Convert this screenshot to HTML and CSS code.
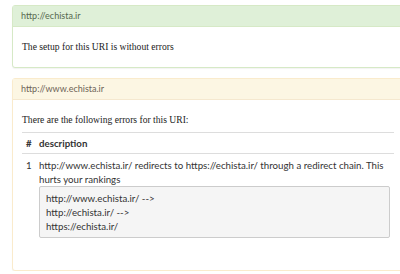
FILE: index.html
```html
<!DOCTYPE html>
<html>
<head>
<meta charset="utf-8">
<link rel="stylesheet" href="styles.css">
</head>
<body>
<div class="page">
  <div class="panel panel-ok">
    <div class="panel-heading">http://echista.ir</div>
    <div class="panel-body">
      <p class="msg">The setup for this URI is without errors</p>
    </div>
  </div>
  <div class="panel panel-warn">
    <div class="panel-heading">http://www.echista.ir</div>
    <div class="panel-body">
      <p class="msg msg-tight">There are the following errors for this URI:</p>
      <table class="errors">
        <thead>
          <tr><th class="num">#</th><th>description</th></tr>
        </thead>
        <tbody>
          <tr>
            <td class="num">1</td>
            <td>http://www.echista.ir/ redirects to https://echista.ir/ through a redirect chain. This hurts your rankings
              <pre class="chain">http://www.echista.ir/ --&gt;
http://echista.ir/ --&gt;
https://echista.ir/</pre>
            </td>
          </tr>
        </tbody>
      </table>
    </div>
  </div>
</div>
</body>
</html>
```
FILE: styles.css
```css
html, body {
  margin: 0;
  padding: 0;
  overflow: hidden;
  background: #fff;
}
.page {
  padding: 5px 0 0 12px;
  display: flex;
  flex-direction: column;
  gap: 10px;
  width: 392px;
}
.panel {
  border: 1px solid #d6e9c6;
  border-radius: 3px;
  box-shadow: 0 1px 1px rgba(0,0,0,.05);
  background: #fff;
}
.panel-heading {
  height: 20px;
  line-height: 20px;
  padding: 0 8px;
  font-family: Lato, sans-serif;
  font-size: 9px;
  border-bottom: 1px solid transparent;
}
.panel-ok .panel-heading {
  background: #dff0d8;
  color: #56684f;
  border-bottom-color: #d6e9c6;
}
.panel-warn {
  border-color: #faebcc;
}
.panel-warn .panel-heading {
  background: #fcf6e3;
  color: #6e6457;
  border-bottom-color: #f5e8cf;
}
.panel-body {
  padding: 10px 9px;
}
.msg {
  margin: 0;
  font-family: "Liberation Serif", serif;
  font-size: 9.6px;
  line-height: 20px;
  color: #222;
}
.msg-tight {
  margin-bottom: 2px;
}
.errors {
  width: 100%;
  border-collapse: collapse;
  margin-bottom: 18px;
  font-family: Lato, sans-serif;
  font-size: 9.7px;
  color: #333;
}
.errors th, .errors td {
  text-align: left;
  vertical-align: top;
  padding: 4px 4px 4px 4px;
  line-height: 14px;
}
.errors th {
  line-height: 12px;
  border-top: 1px solid #ddd;
  border-bottom: 1px solid #ddd;
  font-weight: bold;
}
.errors .num {
  width: 8px;
  padding-right: 1px;
}
.chain {
  margin: 0;
  padding: 4px 6px;
  background: #f5f5f5;
  border: 1px solid #ccc;
  border-radius: 2px;
  font-family: Lato, sans-serif;
  font-size: 9.7px;
  line-height: 14px;
  color: #333;
}
```
